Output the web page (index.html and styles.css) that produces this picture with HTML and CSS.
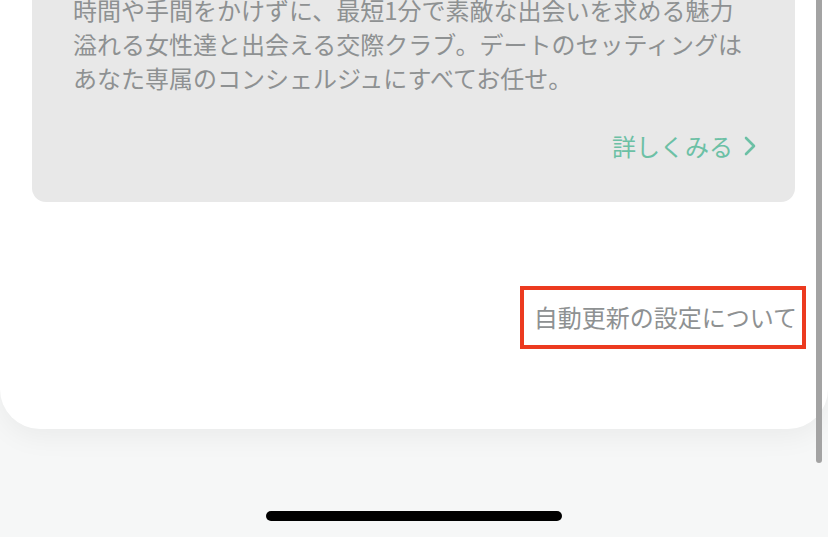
FILE: index.html
```html
<!DOCTYPE html>
<html lang="ja">
<head>
<meta charset="utf-8">
<link rel="stylesheet" href="styles.css">
</head>
<body>
<div class="screen">
  <div class="card">
    <div class="info">
      <p class="desc">時間や手間をかけずに、最短1分で素敵な出会いを求める魅力<br>溢れる女性達と出会える交際クラブ。デートのセッティングは<br>あなた専属のコンシェルジュにすべてお任せ。</p>
      <div class="more-row">
        <a class="more">詳しくみる<svg class="chev" width="14" height="22" viewBox="0 0 14 22"><path d="M3 3 L11 11 L3 19" fill="none" stroke="#6cc0a5" stroke-width="2.6" stroke-linecap="round" stroke-linejoin="round"/></svg></a>
      </div>
    </div>
    <div class="auto-row">
      <a class="auto">自動更新の設定について</a>
    </div>
  </div>
  <div class="home-area">
    <div class="home-bar"></div>
  </div>
  <div class="scrollbar"></div>
</div>
</body>
</html>
```
FILE: styles.css
```css
html, body {
  margin: 0;
  padding: 0;
}
body {
  width: 828px;
  height: 537px;
  overflow: hidden;
  background: #f6f7f7;
  font-family: "Noto Sans CJK JP", "Noto Sans", sans-serif;
}
.screen {
  position: relative;
  width: 828px;
  height: 537px;
}
.card {
  background: #ffffff;
  height: 429px;
  border-radius: 0 0 40px 40px;
  box-shadow: 0 8px 28px rgba(0, 0, 0, 0.05);
  display: flex;
  flex-direction: column;
}
.info {
  margin: -40px 33px 0 32px;
  padding: 33px 38px 39px 41px;
  background: #e8e8e8;
  border-radius: 0 0 14px 14px;
}
.desc {
  margin: 0;
  font-size: 24px;
  line-height: 34px;
  color: #8e9192;
  white-space: nowrap;
}
.more-row {
  margin-top: 34px;
  display: flex;
  justify-content: flex-end;
}
.more {
  display: flex;
  align-items: center;
  gap: 10px;
  font-size: 24px;
  line-height: 34px;
  color: #6cc0a5;
}
.chev {
  display: block;
}
.auto-row {
  margin-top: 84px;
  display: flex;
  justify-content: flex-end;
  padding-right: 22px;
}
.auto {
  border: 4px solid #ec3a1f;
  padding: 10px 5px 11px 10px;
  font-size: 24px;
  line-height: 34px;
  color: #8e9192;
  white-space: nowrap;
}
.home-area {
  display: flex;
  justify-content: center;
  padding-top: 82px;
}
.home-bar {
  width: 296px;
  height: 10px;
  border-radius: 5px;
  background: #000000;
}
.scrollbar {
  position: absolute;
  top: 0;
  right: 6px;
  width: 6px;
  height: 463px;
  background: #a3a3a3;
  border-radius: 0 0 3px 3px;
}
```
